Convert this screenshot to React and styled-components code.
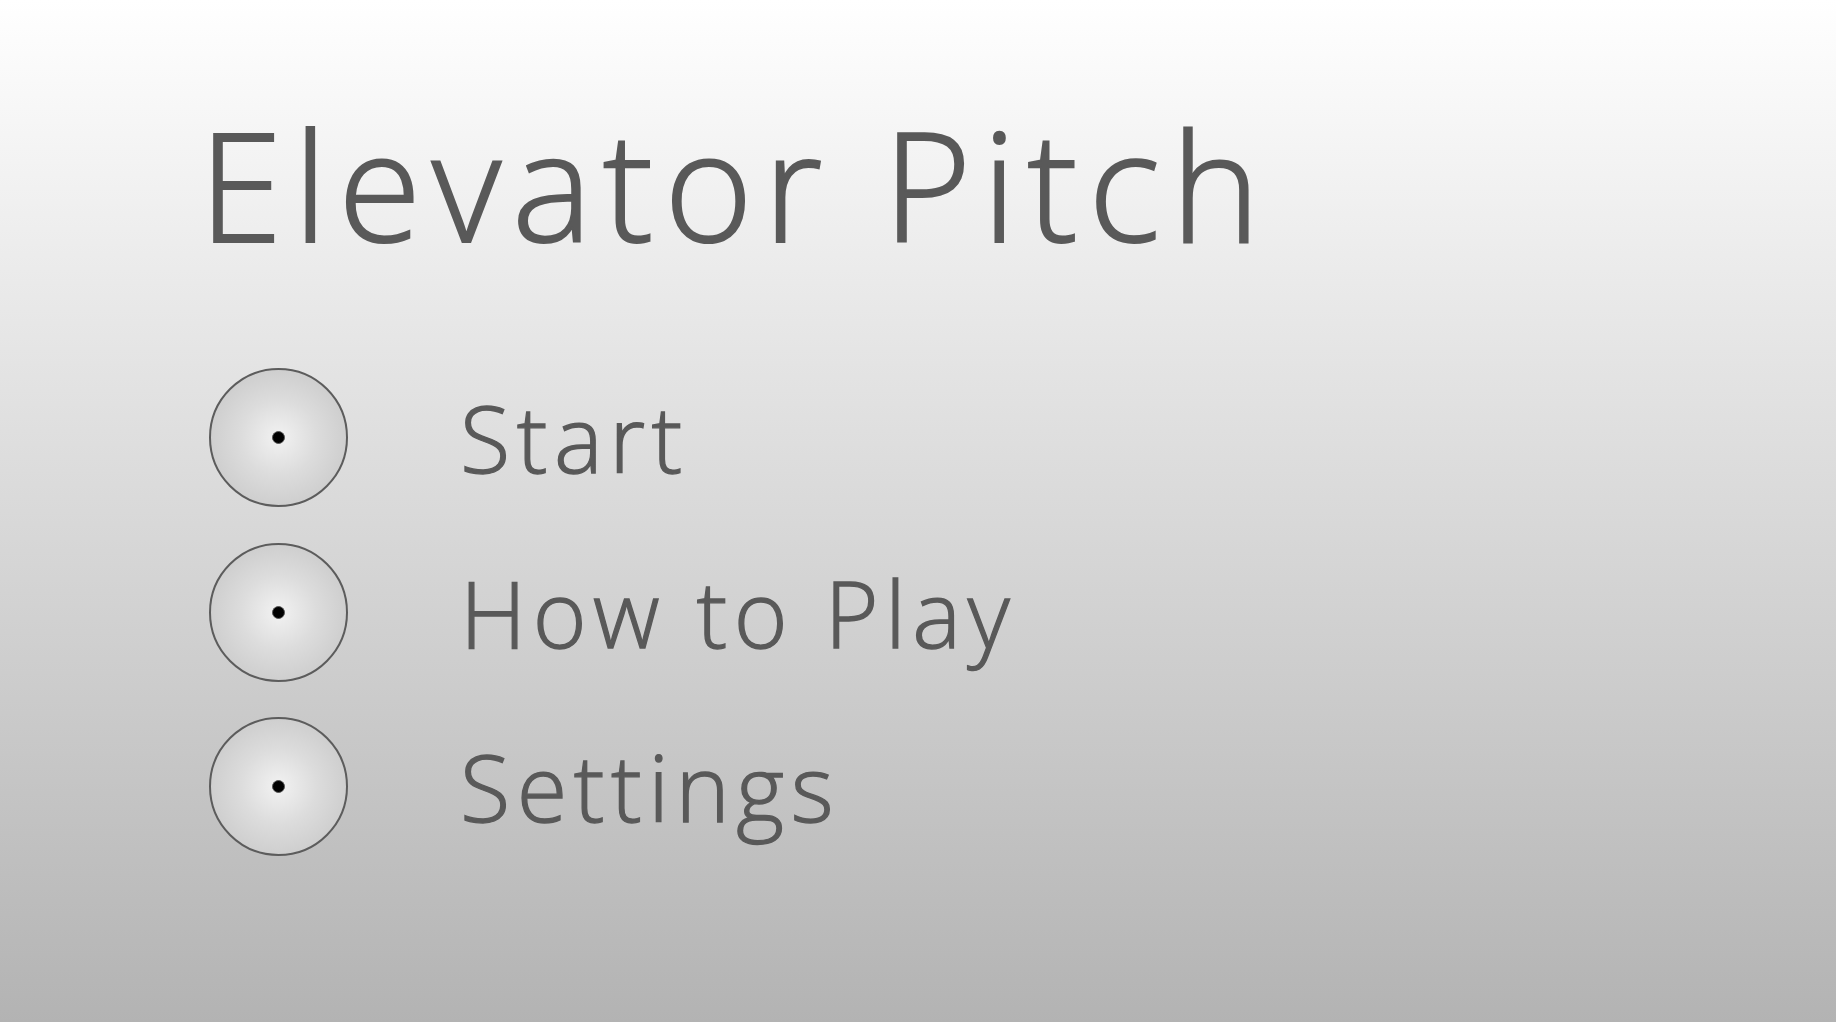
import React from "react";
import styled, { createGlobalStyle } from "styled-components";

const GlobalStyle = createGlobalStyle`
	html, body {
		margin: 0;
		padding: 0;
		height: 100%;
	}
	#root {
		height: 100%;
	}
`;

const Screen = styled.div`
	box-sizing: border-box;
	width: 100%;
	min-height: 100vh;
	padding: 108px 0 0 199px;
	display: flex;
	flex-direction: column;
	background: linear-gradient(to bottom, #ffffff 0%, #b3b3b3 100%);
	font-family: "Open Sans", "DejaVu Sans", sans-serif;
	color: #595959;
`;

const Title = styled.h1`
	margin: 0;
	font-size: 151px;
	font-weight: 300;
	line-height: 1;
	letter-spacing: 10.8px;
	-webkit-text-stroke: 2px #595959;
`;

const Menu = styled.div`
	margin-top: 109px;
	padding-left: 10px;
	display: flex;
	flex-direction: column;
	gap: 35.5px;
`;

const Row = styled.div`
	display: flex;
	align-items: center;
	gap: 112px;
	height: 139px;
	cursor: pointer;
`;

const Knob = styled.div`
	box-sizing: border-box;
	width: 139px;
	height: 139px;
	border-radius: 50%;
	border: 2px solid #5c5c5c;
	background: radial-gradient(circle at center, #f2f2f2 0%, #dcdcdc 40%, #c2c2c2 100%);
	display: flex;
	align-items: center;
	justify-content: center;
	flex-shrink: 0;
`;

const Dot = styled.span`
	box-sizing: border-box;
	width: 13px;
	height: 13px;
	border-radius: 50%;
	background: #000;
	border: 1px solid #555;
`;

const Label = styled.span`
	font-size: 92px;
	font-weight: 300;
	line-height: 139px;
	letter-spacing: 6.5px;
	-webkit-text-stroke: 1.3px #595959;
`;

const items = ["Start", "How to Play", "Settings"];

export default function App() {
	return (
		<>
			<GlobalStyle />
			<Screen>
				<Title>Elevator Pitch</Title>
				<Menu>
					{items.map((item) => (
						<Row key={item}>
							<Knob>
								<Dot />
							</Knob>
							<Label>{item}</Label>
						</Row>
					))}
				</Menu>
			</Screen>
		</>
	);
}
